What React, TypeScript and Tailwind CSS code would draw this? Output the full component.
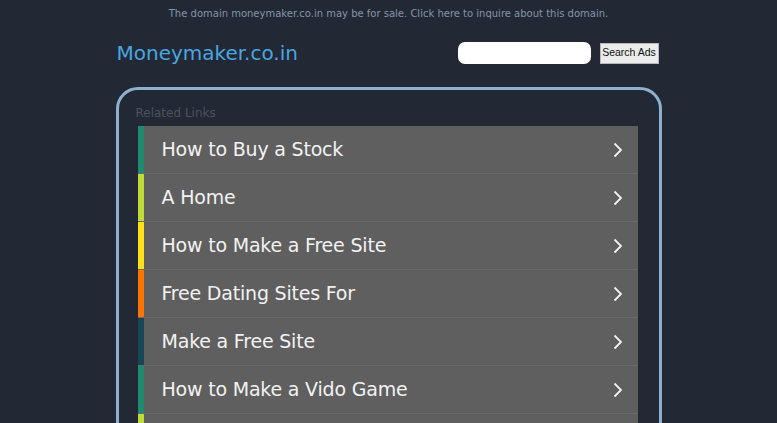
import React from "react";

const rows = [
  { label: "How to Buy a Stock", color: "bg-[#1f8a70]" },
  { label: "A Home", color: "bg-[#bedb39]" },
  { label: "How to Make a Free Site", color: "bg-[#ffe11a]" },
  { label: "Free Dating Sites For", color: "bg-[#fd7400]" },
  { label: "Make a Free Site", color: "bg-[#174656]" },
  { label: "How to Make a Vido Game", color: "bg-[#1f8a70]" },
  { label: "Free Web Hosting", color: "bg-[#bedb39]" },
];

function Chevron() {
  return (
    <svg width="10" height="16" viewBox="0 0 10 16" className="shrink-0">
      <path d="M1.5 1.5 L8 8 L1.5 14.5" fill="none" stroke="#f2f2f2" strokeWidth="1.8" />
    </svg>
  );
}

export default function App() {
  return (
    <div
      className="h-[423px] w-full overflow-hidden bg-[#222834]"
      style={{ fontFamily: '"DejaVu Sans", Verdana, sans-serif' }}
    >
      <div className="flex h-[27px] items-center justify-center text-[10px] text-[#8495a8]">
        The domain moneymaker.co.in may be for sale. Click here to inquire about this domain.
      </div>
      <div className="mx-auto w-[546px]">
        <div className="flex h-[50px] items-center justify-between pl-[1px] pr-[3px] pt-[2px]">
          <div className="text-[20px] leading-none text-[#4ba6e0]">Moneymaker.co.in</div>
          <div className="flex items-center gap-[9px]">
            <div className="h-[22px] w-[133px] rounded-[7px] bg-white" />
            <div
              className="flex h-[21px] w-[59px] items-center justify-center border border-[#b8b8b8] bg-[#ebebeb] text-[10.5px] text-[#111]"
              style={{ fontFamily: '"Liberation Sans", Arial, sans-serif' }}
            >
              Search Ads
            </div>
          </div>
        </div>
        <div className="mt-[10px] h-[400px] rounded-[22px] border-[3px] border-[#8eb0cc] px-[19px] pt-[14px]">
          <div className="-ml-[2px] h-[22px] text-[12px] leading-[18px] text-[#4b5260]">Related Links</div>
          <div className="mr-[2px] flex flex-col">
            {rows.map((r) => (
              <div key={r.label} className="flex h-[48px] border-b border-[#6a6a6a] bg-[#5f5f5f]">
                <div className={`w-[6px] shrink-0 ${r.color}`} />
                <div className="flex flex-1 items-center justify-between pl-[18px] pr-[15px]">
                  <span className="text-[19px] tracking-[-0.2px] text-[#f2f2f2]">{r.label}</span>
                  <Chevron />
                </div>
              </div>
            ))}
          </div>
        </div>
      </div>
    </div>
  );
}
